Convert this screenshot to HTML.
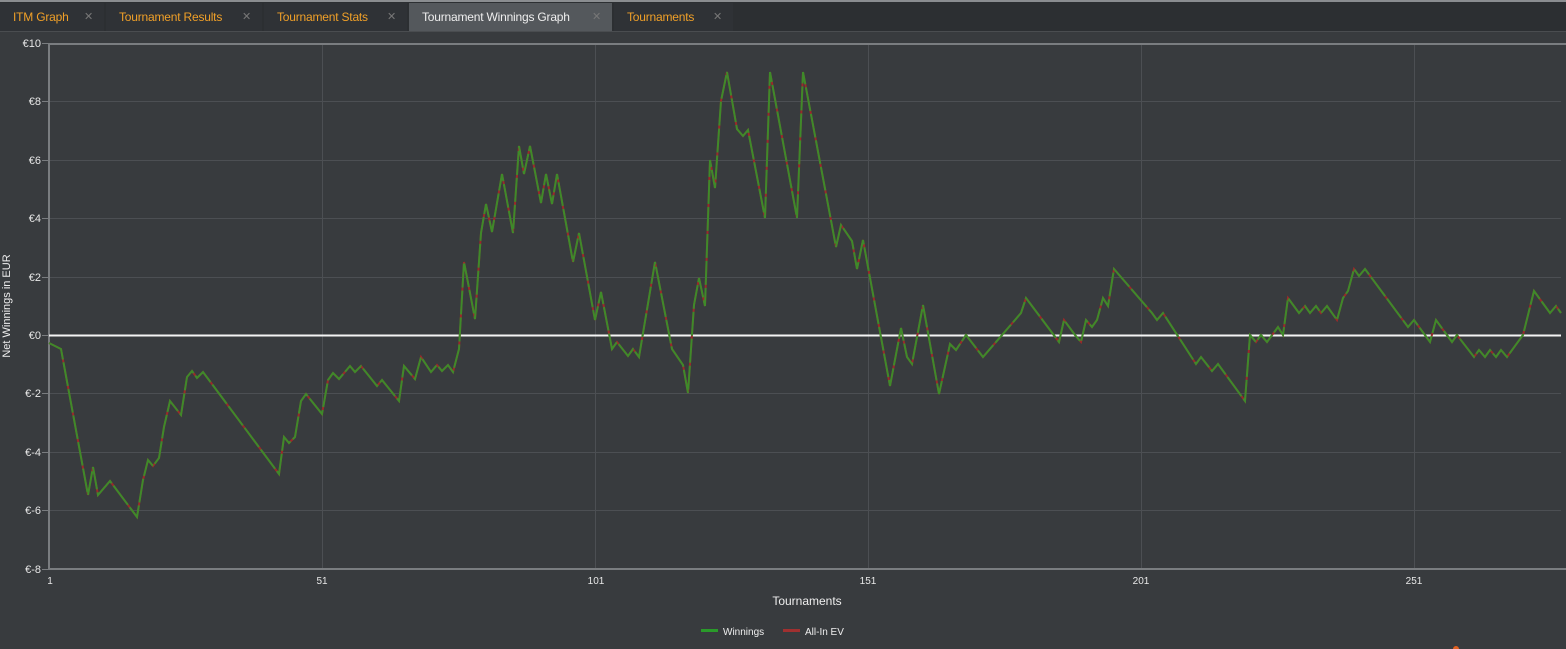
<!DOCTYPE html>
<html><head><meta charset="utf-8"><style>
html,body{margin:0;padding:0;width:1566px;height:649px;overflow:hidden;background:#383b3e;font-family:"Liberation Sans",sans-serif;}
.bar{position:absolute;left:0;top:0;width:1566px;height:32px;background:#2c2f32;border-top:2px solid #8a8d90;box-sizing:border-box;}
.tab{position:absolute;top:3px;height:29px;background:#2f3236;color:#f0a028;font-size:12px;line-height:29px;box-sizing:border-box;padding-left:13px;letter-spacing:-0.2px;}
.tab span{position:absolute;right:11px;top:0;color:#777;font-size:11px;}
.tab.act{background:#54585c;color:#eee;}
.line{position:absolute;left:0;top:31px;width:1566px;height:1px;background:#4a4d50;}
</style></head><body>
<div class="bar"></div>
<div class="tab" style="left:0;width:104px">ITM Graph<span>✕</span></div>
<div class="tab" style="left:106px;width:156px">Tournament Results<span>✕</span></div>
<div class="tab" style="left:264px;width:143px">Tournament Stats<span>✕</span></div>
<div class="tab act" style="left:409px;width:203px">Tournament Winnings Graph<span>✕</span></div>
<div class="tab" style="left:614px;width:119px">Tournaments<span>✕</span></div>
<div class="line"></div>
<svg width="1566" height="649" style="position:absolute;left:0;top:0" xmlns="http://www.w3.org/2000/svg">
<g stroke="#4c4f53" stroke-width="1">
<line x1="49" y1="101.5" x2="1561" y2="101.5"/><line x1="49" y1="160.5" x2="1561" y2="160.5"/>
<line x1="49" y1="218.5" x2="1561" y2="218.5"/><line x1="49" y1="277.5" x2="1561" y2="277.5"/>
<line x1="49" y1="393.5" x2="1561" y2="393.5"/><line x1="49" y1="452.5" x2="1561" y2="452.5"/>
<line x1="49" y1="510.5" x2="1561" y2="510.5"/>
<line x1="322.5" y1="43" x2="322.5" y2="569"/><line x1="595.5" y1="43" x2="595.5" y2="569"/>
<line x1="868.5" y1="43" x2="868.5" y2="569"/><line x1="1141.5" y1="43" x2="1141.5" y2="569"/>
<line x1="1414.5" y1="43" x2="1414.5" y2="569"/>
</g>
<g stroke="#7a7d80" stroke-width="2">
<line x1="49" y1="44" x2="1566" y2="44"/><line x1="49" y1="43" x2="49" y2="570"/><line x1="49" y1="569" x2="1566" y2="569"/>
</g>
<g stroke="#7a7d80" stroke-width="1">
<line x1="42" y1="43.5" x2="49" y2="43.5"/><line x1="42" y1="101.5" x2="49" y2="101.5"/><line x1="42" y1="160.5" x2="49" y2="160.5"/><line x1="42" y1="218.5" x2="49" y2="218.5"/><line x1="42" y1="277.5" x2="49" y2="277.5"/><line x1="42" y1="335.5" x2="49" y2="335.5"/><line x1="42" y1="393.5" x2="49" y2="393.5"/><line x1="42" y1="452.5" x2="49" y2="452.5"/><line x1="42" y1="510.5" x2="49" y2="510.5"/><line x1="42" y1="569.5" x2="49" y2="569.5"/>
</g>
<line x1="49" y1="335.5" x2="1561" y2="335.5" stroke="#f4f4f4" stroke-width="2"/>
<g font-size="11" fill="#e8e8e8" text-anchor="end">
<text x="41" y="47">€10</text><text x="41" y="105">€8</text><text x="41" y="164">€6</text><text x="41" y="222">€4</text><text x="41" y="281">€2</text><text x="41" y="339">€0</text><text x="41" y="397">€-2</text><text x="41" y="456">€-4</text><text x="41" y="514">€-6</text><text x="41" y="573">€-8</text>
</g>
<g font-size="10" fill="#e8e8e8" text-anchor="middle">
<text x="50" y="584">1</text><text x="322" y="584">51</text><text x="596" y="584">101</text><text x="868" y="584">151</text><text x="1141" y="584">201</text><text x="1414" y="584">251</text>
</g>
<text x="807" y="605" font-size="12" fill="#eee" text-anchor="middle">Tournaments</text>
<text transform="translate(10,306) rotate(-90)" font-size="11" fill="#eee" text-anchor="middle">Net Winnings in EUR</text>
<polyline fill="none" stroke="#9a2a2a" stroke-width="2" points="49,343 61,349 88,495 93,467 98,495 110,481 137,517 143,480 148,460 153,466 159,458 164,427 170,401 181,415 187,377 192,371 197,378 203,372 279,474 284,437 289,443 295,437 301,401 306,394 322,414 328,380 333,373 339,379 350,366 355,372 361,366 377,386 382,380 399,401 404,366 415,379 421,357 431,372 437,365 442,371 448,365 453,372 459,349 464,262 475,319 481,233 486,204 492,232 502,174 513,233 519,146 524,174 530,146 541,203 546,174 552,204 557,174 573,262 579,233 595,320 601,292 612,349 617,342 628,356 633,349 639,357 655,262 672,349 683,365 688,393 694,305 699,278 705,306 710,160 715,188 721,101 727,72 737,129 743,136 748,130 765,218 770,72 797,218 803,72 836,247 841,225 852,241 857,269 863,240 890,386 901,328 907,357 912,364 923,305 939,394 950,344 956,350 966,335 983,357 1015,320 1021,313 1026,298 1059,342 1064,320 1075,335 1081,342 1086,320 1092,327 1097,320 1103,298 1108,306 1114,269 1152,313 1157,320 1163,313 1196,364 1201,357 1212,371 1218,364 1245,401 1250,335 1256,342 1261,335 1267,342 1278,327 1283,335 1288,298 1299,313 1305,306 1310,313 1316,306 1321,313 1327,306 1337,320 1343,298 1348,291 1354,269 1359,276 1365,269 1408,327 1414,320 1430,342 1436,320 1452,342 1457,335 1474,357 1479,350 1485,357 1490,350 1496,357 1501,350 1507,357 1523,335 1534,291 1550,313 1556,306 1561,313"/>
<polyline fill="none" stroke="#3e8a2a" stroke-width="2" stroke-dasharray="24 3" points="49,343 61,349 88,495 93,467 98,495 110,481 137,517 143,480 148,460 153,466 159,458 164,427 170,401 181,415 187,377 192,371 197,378 203,372 279,474 284,437 289,443 295,437 301,401 306,394 322,414 328,380 333,373 339,379 350,366 355,372 361,366 377,386 382,380 399,401 404,366 415,379 421,357 431,372 437,365 442,371 448,365 453,372 459,349 464,262 475,319 481,233 486,204 492,232 502,174 513,233 519,146 524,174 530,146 541,203 546,174 552,204 557,174 573,262 579,233 595,320 601,292 612,349 617,342 628,356 633,349 639,357 655,262 672,349 683,365 688,393 694,305 699,278 705,306 710,160 715,188 721,101 727,72 737,129 743,136 748,130 765,218 770,72 797,218 803,72 836,247 841,225 852,241 857,269 863,240 890,386 901,328 907,357 912,364 923,305 939,394 950,344 956,350 966,335 983,357 1015,320 1021,313 1026,298 1059,342 1064,320 1075,335 1081,342 1086,320 1092,327 1097,320 1103,298 1108,306 1114,269 1152,313 1157,320 1163,313 1196,364 1201,357 1212,371 1218,364 1245,401 1250,335 1256,342 1261,335 1267,342 1278,327 1283,335 1288,298 1299,313 1305,306 1310,313 1316,306 1321,313 1327,306 1337,320 1343,298 1348,291 1354,269 1359,276 1365,269 1408,327 1414,320 1430,342 1436,320 1452,342 1457,335 1474,357 1479,350 1485,357 1490,350 1496,357 1501,350 1507,357 1523,335 1534,291 1550,313 1556,306 1561,313"/>
<rect x="701" y="629" width="17" height="3" fill="#2a9a2a"/>
<text x="723" y="635" font-size="10" fill="#eee">Winnings</text>
<rect x="783" y="629" width="17" height="3" fill="#a03030"/>
<text x="805" y="635" font-size="10" fill="#eee">All-In EV</text>
<circle cx="1456" cy="649" r="3" fill="#e06020"/>
</svg>
</body></html>
